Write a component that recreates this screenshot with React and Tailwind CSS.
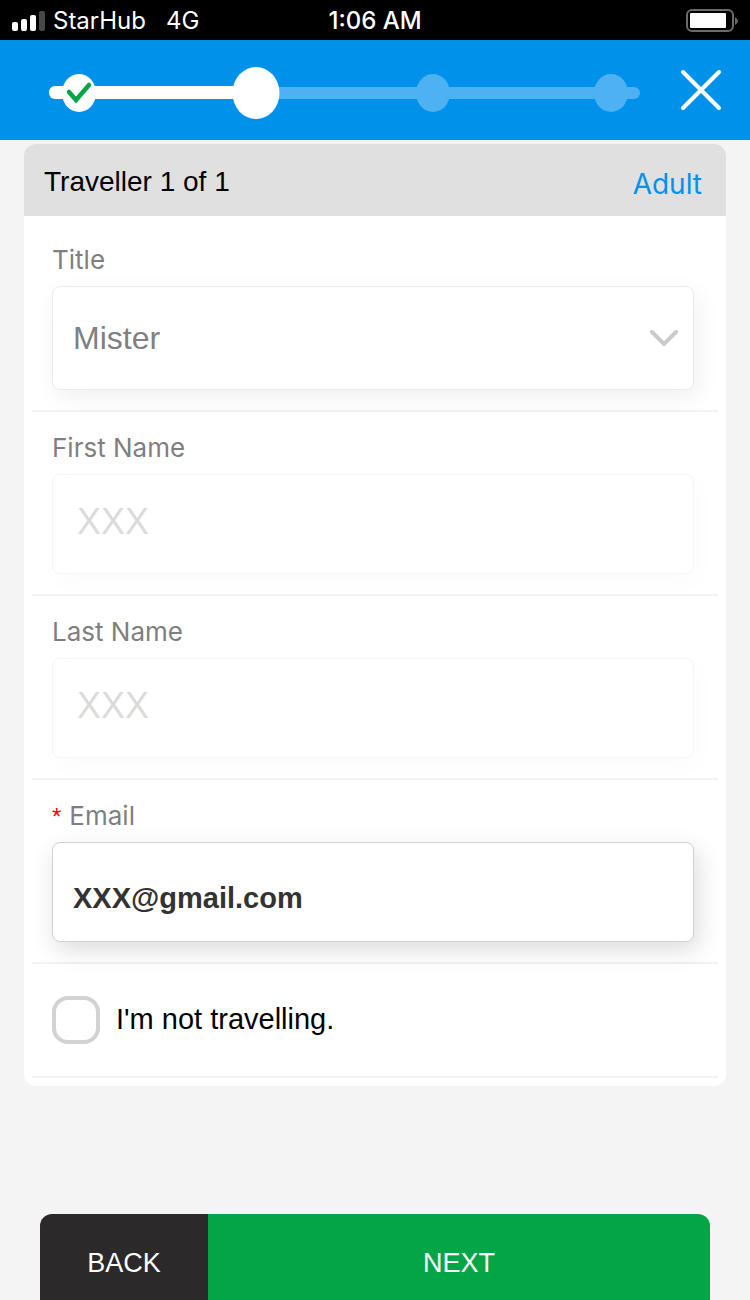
import { useState } from "react";

function StatusBar() {
  return (
    <div className="flex h-10 items-center bg-black px-3 pt-px font-[Inter,sans-serif] text-2xl text-white">
      <div className="flex flex-1 items-center">
        <svg width="33" height="20" viewBox="0 0 33 20" className="mr-2" aria-hidden="true">
          <rect x="0" y="11" width="6" height="9" rx="2" fill="#fff" />
          <rect x="9" y="8" width="6" height="12" rx="2" fill="#fff" />
          <rect x="18" y="4" width="6" height="16" rx="2" fill="#fff" />
          <rect x="27" y="0" width="6" height="20" rx="2" fill="#484848" />
        </svg>
        <span>StarHub</span>
        <span className="ml-5">4G</span>
      </div>
      <span className="font-medium">1:06 AM</span>
      <div className="flex flex-1 justify-end">
        <svg width="53" height="23" viewBox="0 0 53 23" aria-hidden="true">
          <rect x="2" y="1" width="46" height="21" rx="5" fill="none" stroke="#6b6b6b" strokeWidth="2" />
          <rect x="5" y="4" width="36" height="15" rx="1" fill="#fff" />
          <path d="M50 8q6 4 0 8z" fill="#6b6b6b" />
        </svg>
      </div>
    </div>
  );
}

function StepHeader() {
  return (
    <header className="flex h-[100px] items-center bg-[#0091eb] pl-12 pr-7">
      <svg viewBox="0 0 592 54" className="mt-1.5 min-w-0 flex-1" role="img" aria-label="Step 2 of 4">
        <g fill="#4eb1f1">
          <rect x="207" y="21" width="385" height="12" rx="6" />
          <ellipse cx="385" cy="27" rx="17" ry="19" />
          <ellipse cx="563" cy="27" rx="17" ry="19" />
        </g>
        <g fill="#fff">
          <rect x="1" y="20" width="220" height="13" rx="6" />
          <ellipse cx="31" cy="27" rx="17" ry="19" />
          <ellipse cx="208" cy="27" rx="23.5" ry="26" />
        </g>
        <path
          d="M21 26l7 8 13-15"
          fill="none"
          stroke="#04a547"
          strokeWidth="4.5"
          strokeLinecap="round"
        />
      </svg>
      <button type="button" aria-label="Close" className="ml-10">
        <svg width="42" height="42" viewBox="0 0 42 42">
          <path d="M3 3l36 36M39 3L3 39" stroke="#fff" strokeWidth="4" strokeLinecap="round" />
        </svg>
      </button>
    </header>
  );
}

function Field({ id, label, required, className = "pt-5", children }) {
  return (
    <div className={`mx-2 border-b-2 border-[#f2f2f2] pb-5 pl-5 pr-6 ${className}`}>
      <label
        htmlFor={id}
        className="mb-[10px] block font-[Inter,sans-serif] text-[26px] leading-8 text-[#7f7f7f]"
      >
        {required && (
          <span className="mr-2 font-[Liberation_Sans,sans-serif] text-2xl leading-none text-[#ff0000]">*</span>
        )}
        {label}
      </label>
      {children}
    </div>
  );
}

function App() {
  const [title, setTitle] = useState("Mister");
  const [email, setEmail] = useState("XXX@gmail.com");
  const [notTravelling, setNotTravelling] = useState(false);

  return (
    <div className="flex min-h-screen flex-col bg-[#f4f4f4] font-[Liberation_Sans,sans-serif]">
      <StatusBar />
      <StepHeader />

      <form id="traveller" className="mx-6 mt-1 overflow-hidden rounded-xl bg-white pb-2">
        <div className="flex h-[72px] items-center justify-between bg-[#e0e0e0] pl-5 pr-6 pt-1 text-[28px]">
          <h1>Traveller 1 of 1</h1>
          <span className="pt-1 font-[Inter,sans-serif] text-[#0091eb]">Adult</span>
        </div>

        <Field id="title" label="Title" className="pt-7">
          <div className="relative">
            <select
              id="title"
              value={title}
              onChange={(e) => setTitle(e.target.value)}
              className="block h-[104px] w-full appearance-none rounded-lg border border-[#ebebeb] bg-white px-5 text-[32px] text-[#808080] shadow-[4px_8px_24px_rgba(0,0,0,0.06)]"
            >
              <option>Mister</option>
              <option>Miss</option>
              <option>Mrs</option>
            </select>
            <svg
              width="28"
              height="17"
              viewBox="0 0 28 17"
              className="pointer-events-none absolute right-4 top-11"
              aria-hidden="true"
            >
              <path d="M2 2l12 12L26 2" fill="none" stroke="#cbcbcb" strokeWidth="4" strokeLinecap="round" />
            </svg>
          </div>
        </Field>

        <Field id="firstName" label="First Name">
          <input
            id="firstName"
            value="XXX"
            disabled
            className="block h-[100px] w-full rounded-lg border border-[#f5f5f5] bg-white px-6 pb-1 text-4xl text-[#dcdcdc] shadow-[4px_8px_24px_rgba(0,0,0,0.02)]"
          />
        </Field>
        <Field id="lastName" label="Last Name">
          <input
            id="lastName"
            value="XXX"
            disabled
            className="block h-[100px] w-full rounded-lg border border-[#f5f5f5] bg-white px-6 pb-1 text-4xl text-[#dcdcdc] shadow-[4px_8px_24px_rgba(0,0,0,0.02)]"
          />
        </Field>

        <Field id="email" label="Email" required>
          <input
            id="email"
            type="email"
            value={email}
            onChange={(e) => setEmail(e.target.value)}
            className="block h-[100px] w-full rounded-lg border border-[#d2d2d2] bg-white px-5 pt-3 text-[29px] font-bold text-[#333333] shadow-[4px_8px_24px_rgba(0,0,0,0.14)]"
          />
        </Field>

        <div className="mx-2 border-b-2 border-[#f2f2f2] py-8 pl-5 pr-6">
          <label className="flex items-center text-[29px]">
            <input
              type="checkbox"
              checked={notTravelling}
              onChange={(e) => setNotTravelling(e.target.checked)}
              className="mr-4 size-12 appearance-none rounded-2xl border-4 border-[#d2d2d2] bg-white checked:bg-[#04a547]"
            />
            I'm not travelling.
          </label>
        </div>
      </form>

      <footer className="mx-10 mt-auto flex overflow-hidden rounded-t-xl text-[27px] text-white">
        <button type="button" className="h-[86px] w-[168px] bg-[#2b292a] pt-3">
          BACK
        </button>
        <button type="submit" form="traveller" className="h-[86px] flex-1 bg-[#04a547] pt-3">
          NEXT
        </button>
      </footer>
    </div>
  );
}

export default App;
